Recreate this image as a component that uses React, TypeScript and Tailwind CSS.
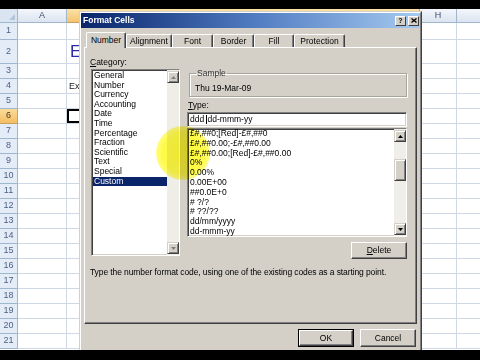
import React from "react";

const rowHeights = [17, 24, ...Array(19).fill(15)];

function Sheet() {
  return (
    <div className="flex flex-col">
      <div className="flex h-[14px]">
        <div className="w-[18px] h-full bg-[#dbe4f1] border-r border-b border-[#9eb6ce] flex items-end justify-end p-[2px]">
          <div className="w-0 h-0 border-l-[6px] border-l-transparent border-b-[6px] border-b-[#b4c4da]" />
        </div>
        <div className="w-[49px] h-full bg-gradient-to-b from-[#f4f7fb] to-[#dbe4f0] border-r border-b border-[#9eb6ce] text-[9px] leading-[13px] text-center text-[#3b4f6e]">A</div>
        <div className="w-[353px] h-full bg-gradient-to-b from-[#fbe2a8] to-[#f5c470] border-r border-b border-[#c9a060]" />
        <div className="w-[37px] h-full bg-gradient-to-b from-[#f4f7fb] to-[#dbe4f0] border-r border-b border-[#9eb6ce] text-[9px] leading-[13px] text-center text-[#3b4f6e]">H</div>
        <div className="flex-1 h-full bg-gradient-to-b from-[#f4f7fb] to-[#dbe4f0] border-b border-[#9eb6ce]" />
      </div>
      {rowHeights.map((h, i) => {
        const n = i + 1;
        const sel = n === 6;
        return (
          <div key={n} className="flex shrink-0" style={{ height: h }}>
            <div
              className={
                "w-[18px] h-full border-r border-b text-[9px] text-center flex items-center justify-center " +
                (sel
                  ? "bg-gradient-to-b from-[#fbdc9a] to-[#f3be62] border-[#c9a060] text-[#4a3a1a]"
                  : "bg-[#e4ecf7] border-[#9eb6ce] text-[#4d6185]")
              }
            >
              {n}
            </div>
            <div className="w-[49px] h-full border-r border-b border-[#d0d7e5] bg-white" />
            <div
              className={
                "w-[353px] h-full border-r border-b border-[#d0d7e5] bg-white flex items-center pl-[2px] " +
                (sel ? "shadow-[inset_0_0_0_2px_#000]" : "")
              }
            >
              {n === 2 && <span className="text-[17px] leading-none text-[#2b2ba8] pl-[1px]">E</span>}
              {n === 4 && <span className="text-[9px] leading-none text-[#222]">Ex</span>}
            </div>
            <div className="w-[37px] h-full border-r border-b border-[#d0d7e5] bg-white" />
            <div className="flex-1 h-full border-b border-[#d0d7e5] bg-white" />
          </div>
        );
      })}
    </div>
  );
}

function Arrow({ up, disabled }: { up?: boolean; disabled?: boolean }) {
  return (
    <div className="w-[12px] h-[12px] bg-[#d4d0c8] border border-t-[#d4d0c8] border-l-[#d4d0c8] border-r-[#404040] border-b-[#404040] shadow-[inset_1px_1px_0_#fff,inset_-1px_-1px_0_#808080] flex items-center justify-center">
      <svg width="5" height="3" viewBox="0 0 5 3">
        {up ? (
          <polygon points="2.5,0 5,3 0,3" fill={disabled ? "#808080" : "#000"} />
        ) : (
          <polygon points="0,0 5,0 2.5,3" fill={disabled ? "#808080" : "#000"} />
        )}
      </svg>
    </div>
  );
}

function Btn({ children, def, className = "" }: { children: React.ReactNode; def?: boolean; className?: string }) {
  return (
    <div className={"bg-[#d4d0c8] " + (def ? "border border-black " : "") + className}>
      <div className="w-full h-full border border-t-white border-l-white border-r-[#404040] border-b-[#404040] shadow-[inset_-1px_-1px_0_#808080] flex items-center justify-center text-[8.5px] text-black">
        {children}
      </div>
    </div>
  );
}

const categories = ["General", "Number", "Currency", "Accounting", "Date", "Time", "Percentage", "Fraction", "Scientific", "Text", "Special", "Custom"];
const formats = [
  "£#,##0;[Red]-£#,##0",
  "£#,##0.00;-£#,##0.00",
  "£#,##0.00;[Red]-£#,##0.00",
  "0%",
  "0.00%",
  "0.00E+00",
  "##0.0E+0",
  "# ?/?",
  "# ??/??",
  "dd/mm/yyyy",
  "dd-mmm-yy",
];

const sunken = "border border-t-[#808080] border-l-[#808080] border-r-white border-b-white";
const sunkenInner = "shadow-[inset_1px_1px_0_#404040,inset_-1px_-1px_0_#d4d0c8]";

function Dialog() {
  const tabs = [
    { t: "Alignment", w: 46 },
    { t: "Font", w: 41 },
    { t: "Border", w: 41 },
    { t: "Fill", w: 40 },
    { t: "Protection", w: 51 },
  ];
  return (
    <div className="absolute left-[79px] top-[2px] w-[343px] h-[345px] bg-[#d4d0c8] border border-t-[#d4d0c8] border-l-[#d4d0c8] border-r-[#404040] border-b-[#404040] text-black">
      <div className="h-full border border-t-white border-l-white border-r-[#808080] border-b-[#808080] flex flex-col">
        {/* Title bar */}
        <div className="h-[15px] shrink-0 bg-gradient-to-r from-[#0a246a] via-[#4f7ac0] to-[#a6caf0] flex items-center pl-[2px] pr-[1px]">
          <span className="text-white font-bold text-[8.5px] leading-none">Format Cells</span>
          <div className="ml-auto flex gap-[2px]">
            <div className="w-[11px] h-[10px] bg-[#d4d0c8] border border-t-white border-l-white border-r-[#404040] border-b-[#404040] flex items-center justify-center text-[7px] font-bold leading-none">?</div>
            <div className="w-[11px] h-[10px] bg-[#d4d0c8] border border-t-white border-l-white border-r-[#404040] border-b-[#404040] flex items-center justify-center">
              <svg width="6" height="5" viewBox="0 0 6 5">
                <path d="M0.5 0.5 L5.5 4.5 M5.5 0.5 L0.5 4.5" stroke="#000" strokeWidth="1.3" />
              </svg>
            </div>
          </div>
        </div>
        {/* Tabs + panel */}
        <div className="pl-[3px] pr-[3px] pt-[4px]">
          <div className="flex items-end h-[15px] pl-[2px]">
            <div className="relative z-10 -mb-[1px] w-[40px] h-[16px] bg-[#d4d0c8] border-l border-t border-white border-r border-r-[#404040] rounded-t-[2px] shadow-[inset_-1px_0_0_#808080] flex items-center justify-center text-[8.5px] pb-[1px]">
              Number
            </div>
            {tabs.map((tb) => (
              <div
                key={tb.t}
                className="h-[13px] bg-[#d4d0c8] border-l border-t border-white border-r border-r-[#404040] rounded-t-[2px] shadow-[inset_-1px_0_0_#808080] flex items-center justify-center text-[8.5px]"
                style={{ width: tb.w }}
              >
                {tb.t}
              </div>
            ))}
          </div>
          <div className="h-[277px] border border-t-white border-l-white border-r-[#404040] border-b-[#404040] shadow-[inset_-1px_-1px_0_#808080] pl-[5px] pt-[9px]">
            <div className="flex">
              {/* Left column */}
              <div className="w-[91px] flex flex-col">
                <div className="text-[8.5px] leading-[10px] h-[10px]"><span className="underline">C</span>ategory:</div>
                <div className={"mt-[2px] ml-[1px] w-[89px] h-[187px] bg-white " + sunken}>
                  <div className={"w-full h-full flex " + sunkenInner}>
                    <div className="flex-1 pt-[1px] pl-[1px]">
                      {categories.map((c) => (
                        <div
                          key={c}
                          className={"text-[8.5px] leading-[9.6px] h-[9.6px] pl-[1px] whitespace-nowrap " + (c === "Custom" ? "bg-[#0a246a] text-white" : "")}
                        >
                          {c}
                        </div>
                      ))}
                    </div>
                    <div className="w-[12px] h-full bg-[#eeede6] flex flex-col justify-between pr-[1px] pb-[1px] pt-[1px]">
                      <Arrow up disabled />
                      <Arrow disabled />
                    </div>
                  </div>
                </div>
              </div>
              {/* Right column */}
              <div className="ml-[6px] w-[220px] flex flex-col">
                <fieldset className="mt-[11px] ml-[2px] w-[218px] border border-[#a8a498] shadow-[inset_1px_1px_0_#fff,1px_1px_0_#fff] pl-[4px] pb-[3px]">
                  <legend className="ml-[2px] px-[1px] text-[8.5px] leading-[10px] text-[#333]">Sample</legend>
                  <div className="pt-[5px] text-[8.5px] leading-[10px] pl-[1px]">Thu 19-Mar-09</div>
                </fieldset>
                <div className="mt-[3px] ml-[1px] text-[8.5px] leading-[10px] h-[10px]"><span className="underline">T</span>ype:</div>
                <div className={"mt-[2px] h-[15px] bg-white " + sunken}>
                  <div className={"w-full h-full flex items-center pl-[2px] text-[8.5px] " + sunkenInner}>
                    <span className="whitespace-pre">ddd </span>
                    <span className="inline-block w-[1px] h-[9px] bg-black -ml-[1px] mr-[1px]" />
                    <span>dd-mmm-yy</span>
                  </div>
                </div>
                <div className={"mt-[1px] h-[109px] bg-white " + sunken}>
                  <div className={"w-full h-full flex overflow-hidden " + sunkenInner}>
                    <div className="flex-1 pl-[2px] pt-[0px] overflow-hidden">
                      {formats.map((f) => (
                        <div key={f} className="text-[8.5px] leading-[9.8px] h-[9.8px] whitespace-nowrap">{f}</div>
                      ))}
                    </div>
                    <div className="w-[12px] h-full bg-[#efeee8] flex flex-col pr-[1px] pt-[1px] pb-[1px]">
                      <Arrow up />
                      <div className="mt-[17px] w-[12px] h-[22px] bg-[#d4d0c8] border border-t-[#d4d0c8] border-l-[#d4d0c8] border-r-[#404040] border-b-[#404040] shadow-[inset_1px_1px_0_#fff,inset_-1px_-1px_0_#808080]" />
                      <div className="mt-auto">
                        <Arrow />
                      </div>
                    </div>
                  </div>
                </div>
                <div className="mt-[5px] self-end">
                  <Btn className="w-[56px] h-[17px]"><span><span className="underline">D</span>elete</span></Btn>
                </div>
              </div>
            </div>
            <div className="mt-[8px] text-[8.5px] leading-[10px] whitespace-nowrap tracking-[-0.1px]">
              Type the number format code, using one of the existing codes as a starting point.
            </div>
          </div>
          <div className="mt-[5px] flex justify-end gap-[6px] pr-[1px]">
            <Btn def className="w-[56px] h-[18px]">OK</Btn>
            <Btn className="w-[56px] h-[18px]">Cancel</Btn>
          </div>
        </div>
      </div>
    </div>
  );
}

export default function App() {
  return (
    <div className="w-[480px] h-[360px] bg-black flex flex-col overflow-hidden font-['Liberation_Sans',Arial,sans-serif]">
      <div className="h-[9px] shrink-0 bg-black" />
      <div className="relative h-[341px] shrink-0 overflow-hidden bg-white">
        <Sheet />
        <Dialog />
        <div className="absolute left-[156px] top-[117px] w-[54px] h-[54px] rounded-full pointer-events-none mix-blend-multiply bg-[radial-gradient(circle,rgba(255,250,40,0.95)_0%,rgba(255,250,40,0.85)_55%,rgba(255,250,40,0)_100%)]" />
      </div>
      <div className="h-[10px] shrink-0 bg-black" />
    </div>
  );
}
